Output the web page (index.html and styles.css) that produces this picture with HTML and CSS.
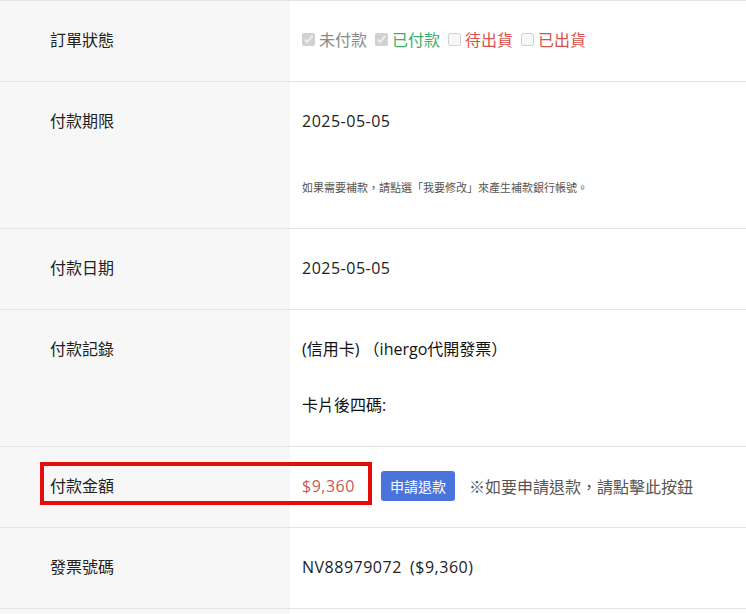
FILE: index.html
```html
<!DOCTYPE html>
<html lang="zh-Hant">
<head>
<meta charset="utf-8">
<title>訂單資訊</title>
<link rel="stylesheet" href="styles.css">
</head>
<body>
<table class="info">
  <tr>
    <th>訂單狀態</th>
    <td>
      <div class="status">
        <label class="st st-gray"><input type="checkbox" checked disabled>未付款</label>
        <label class="st st-green"><input type="checkbox" checked disabled>已付款</label>
        <label class="st st-red"><input type="checkbox" disabled>待出貨</label>
        <label class="st st-red"><input type="checkbox" disabled>已出貨</label>
      </div>
    </td>
  </tr>
  <tr>
    <th>付款期限</th>
    <td>
      <div class="num">2025-05-05</div>
      <p class="note">如果需要補款，請點選「我要修改」來產生補款銀行帳號。</p>
    </td>
  </tr>
  <tr>
    <th>付款日期</th>
    <td><div class="num">2025-05-05</div></td>
  </tr>
  <tr>
    <th>付款記錄</th>
    <td>
      <div class="strong">(信用卡) （ihergo代開發票）</div>
      <div class="strong second">卡片後四碼:</div>
    </td>
  </tr>
  <tr>
    <th class="marked">付款金額<span class="highlight"></span></th>
    <td>
      <div class="pay">
        <span class="amount num">$9,360</span>
        <button class="refund" type="button">申請退款</button>
        <span class="hint">※如要申請退款，請點擊此按鈕</span>
      </div>
    </td>
  </tr>
  <tr>
    <th>發票號碼</th>
    <td><span class="num">NV88979072</span>&nbsp;&nbsp;<span class="num">($9,360)</span></td>
  </tr>
  <tr>
    <th></th>
    <td></td>
  </tr>
</table>
</body>
</html>
```
FILE: styles.css
```css
html, body {
  margin: 0;
  padding: 0;
  background: #ffffff;
}
body {
  font-family: "Open Sans", "Noto Sans CJK TC", sans-serif;
  font-size: 16px;
  color: #222222;
}
.info {
  width: 746px;
  border-collapse: collapse;
  table-layout: fixed;
}
.info tr {
  border-top: 1px solid #e4e4e8;
}
.info th {
  width: 240px;
  background: #f7f7f7;
  text-align: left;
  vertical-align: top;
  font-weight: 400;
  padding: 28px 0 32px 50px;
  line-height: 20px;
  font-family: "Noto Sans CJK TC", sans-serif;
}
.info td {
  vertical-align: top;
  padding: 29px 12px 31px 12px;
  line-height: 20px;
}
.status {
  display: flex;
  gap: 8px;
  font-family: "Noto Sans CJK TC", sans-serif;
  position: relative;
  top: -1px;
}
.st {
  display: flex;
  align-items: center;
  gap: 4px;
}
.st input {
  margin: 0;
  width: 13px;
  height: 13px;
  accent-color: #cfcfcf;
}
.st-gray { color: #8a8a8a; }
.st-green { color: #3dae6e; }
.st-red { color: #d6524b; }
.num {
  letter-spacing: 0.5px;
}
.note {
  margin: 46px 0 0;
  font-size: 11px;
  color: #555555;
  line-height: 20px;
  font-family: "Noto Sans CJK TC", sans-serif;
}
.strong {
  font-weight: 400;
  color: #111111;
  font-family: "Open Sans", "Noto Sans CJK TC", sans-serif;
}
.second {
  margin-top: 36px;
}
.marked {
  position: relative;
}
.highlight {
  position: absolute;
  left: 40px;
  top: 15px;
  width: 332px;
  height: 43px;
  box-sizing: border-box;
  border: 4px solid #e50c0c;
}
.pay {
  display: flex;
  align-items: center;
  height: 20px;
}
.amount {
  color: #c85a53;
  width: 79px;
}
.refund {
  font-family: "Noto Sans CJK TC", sans-serif;
  font-size: 14px;
  color: #ffffff;
  background: #4a74dc;
  border: none;
  border-radius: 3px;
  height: 30px;
  padding: 0 9px;
  line-height: 30px;
}
.hint {
  margin-left: 14px;
  color: #555555;
  font-family: "Noto Sans CJK TC", sans-serif;
}
```
